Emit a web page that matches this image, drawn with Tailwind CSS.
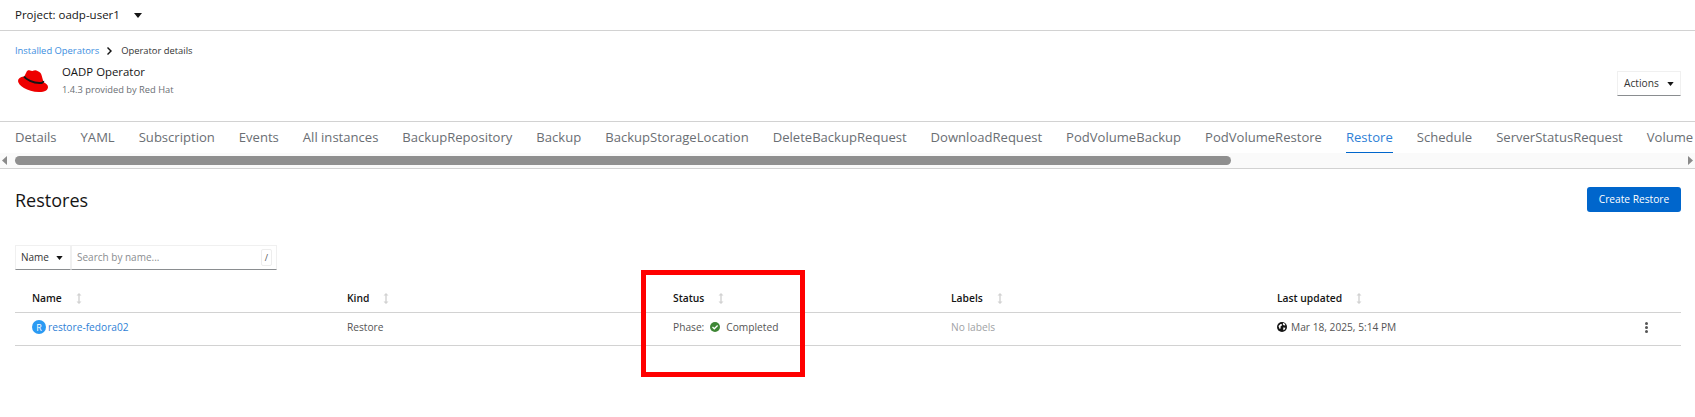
<!DOCTYPE html>
<html lang="en">
<head>
<meta charset="utf-8">
<title>Restores</title>
<script src="https://cdn.jsdelivr.net/npm/@tailwindcss/browser@4"></script>
</head>
<body class="bg-white font-['Open_Sans','Liberation_Sans',sans-serif] text-[#151515] overflow-hidden">
<div class="relative w-[1695px] h-[417px] overflow-hidden">

  <!-- Project bar -->
  <div class="h-[31px] border-b border-[#d2d2d2] pl-[15px] flex items-center gap-[14px] text-[11.5px]">
    <span>Project: oadp-user1</span>
    <svg class="w-[8px] h-[5px]" viewBox="0 0 8 5"><path d="M0 0h8L4 5z" fill="#151515"/></svg>
  </div>

  <!-- Header -->
  <div class="h-[91px] border-b border-[#d2d2d2] pl-[15px] pr-[14px] pt-[12px] relative">
    <div class="flex items-center text-[9.4px] h-[16px]">
      <span class="text-[#3c8ee0]">Installed Operators</span>
      <svg class="w-[6px] h-[8px] mx-[8px]" viewBox="0 0 6 8"><path d="M1 0l4 4-4 4-1-1 3-3-3-3z" fill="#151515"/></svg>
      <span class="text-[#333]">Operator details</span>
    </div>
    <div class="flex justify-between mt-[4px]">
      <div class="flex gap-[14px]">
        <svg class="w-[30px] h-[22px] ml-[3px] mt-[7px]" viewBox="0 0 30 22">
          <path d="M6 7L8.500 2C9 .5 10.500 0 12 .5C13 .8 14 1.200 15 .8C16.500 0 18 0 20 1.200C22 2.400 23 3 23.500 5L25.500 12L14 13z" fill="#e00"/>
          <path d="M5.500 6.500C2.500 7 0 8.500 0 11C0 15 9 22 21 22C27 22 30 20 30 17C30 15 28 13 25 12L14 11z" fill="#e00"/>
          <path d="M6 6.500C8 9.500 15 13 21.500 13C24 13 25.500 12.500 25.300 11" stroke="#151515" stroke-width="2" fill="none"/>
        </svg>
        <div>
          <div class="text-[11.4px] leading-[17px] font-medium text-[#151515]">OADP Operator</div>
          <div class="text-[9.3px] leading-[14px] mt-[3px] text-[#6a6e73]">1.4.3 provided by Red Hat</div>
        </div>
      </div>
      <div class="h-[25px] w-[64px] mt-[8px] border border-[#f0f0f0] border-b-[#8a8d90] flex items-center justify-between pl-[6px] pr-[6px] text-[10.2px] text-[#333]">
        <span>Actions</span>
        <svg class="w-[7px] h-[4px]" viewBox="0 0 8 5"><path d="M0 0h8L4 5z" fill="#151515"/></svg>
      </div>
    </div>
  </div>

  <!-- Tabs -->
  <div class="h-[47px] border-b border-[#d2d2d2] relative overflow-hidden">
    <nav class="flex gap-[24px] pl-[15px] h-[31px] text-[13.07px] leading-[30px] text-[#6a6e73] whitespace-nowrap">
      <span>Details</span><span>YAML</span><span>Subscription</span><span>Events</span><span>All instances</span><span>BackupRepository</span><span>Backup</span><span>BackupStorageLocation</span><span>DeleteBackupRequest</span><span>DownloadRequest</span><span>PodVolumeBackup</span><span>PodVolumeRestore</span>
      <span class="text-[#2f7fd6] border-b border-[#06c] h-[31px]">Restore</span>
      <span>Schedule</span><span>ServerStatusRequest</span><span>Volume</span>
    </nav>
    <div class="h-[15px] bg-[#fafafa] flex items-center pl-[2px] pr-[2px] gap-[8px]">
      <svg class="w-[5px] h-[9px]" viewBox="0 0 5 9"><path d="M5 0v9L0 4.500z" fill="#8a8a8a"/></svg>
      <div class="w-[1216px] h-[9px] rounded-full bg-[#8f8f8f]"></div>
      <svg class="w-[5px] h-[9px] ml-auto" viewBox="0 0 5 9"><path d="M0 0v9l5-4.500z" fill="#8a8a8a"/></svg>
    </div>
  </div>

  <!-- Body -->
  <main class="pl-[15px] pr-[14px]">
    <div class="flex justify-between items-start pt-[18px]">
      <h1 class="text-[18px] leading-[26px] font-medium text-[#151515]">Restores</h1>
      <button class="w-[94px] h-[25px] rounded-[3px] bg-[#06c] text-white text-[10.2px]">Create Restore</button>
    </div>

    <div class="flex w-[262px] h-[25px] mt-[32px] text-[10px]">
      <div class="w-[56px] border border-[#f0f0f0] border-b-[#8a8d90] flex items-center justify-between pl-[5px] pr-[7px] text-[#333]">
        <span>Name</span>
        <svg class="w-[7px] h-[4px]" viewBox="0 0 8 5"><path d="M0 0h8L4 5z" fill="#151515"/></svg>
      </div>
      <div class="flex-1 border border-[#f0f0f0] border-b-[#8a8d90] flex items-center justify-between pl-[5px] pr-[4px] text-[#8a8d90]">
        <span>Search by name...</span>
        <span class="w-[11px] h-[17px] border border-[#ededed] rounded-[2px] flex items-center justify-center text-[#555] text-[9px]">/</span>
      </div>
    </div>

    <div class="grid grid-cols-[315px_326px_278px_326px_1fr] mt-[18px] h-[25px] pt-[3px] border-b border-[#d2d2d2] pl-[17px] items-start text-[10.3px] font-semibold leading-[14px] text-[#151515]">
      <div class="flex items-center gap-[14px]">Name<svg class="w-[6px] h-[11px]" viewBox="0 0 6 11"><path d="M3 0l2.500 2.500H3.700v6h1.800L3 11 .5 8.500h1.800v-6H.5z" fill="#d2d2d2"/></svg></div>
      <div class="flex items-center gap-[14px]">Kind<svg class="w-[6px] h-[11px]" viewBox="0 0 6 11"><path d="M3 0l2.500 2.500H3.700v6h1.800L3 11 .5 8.500h1.800v-6H.5z" fill="#d2d2d2"/></svg></div>
      <div class="flex items-center gap-[14px]">Status<svg class="w-[6px] h-[11px]" viewBox="0 0 6 11"><path d="M3 0l2.500 2.500H3.700v6h1.800L3 11 .5 8.500h1.800v-6H.5z" fill="#d2d2d2"/></svg></div>
      <div class="flex items-center gap-[14px]">Labels<svg class="w-[6px] h-[11px]" viewBox="0 0 6 11"><path d="M3 0l2.500 2.500H3.700v6h1.800L3 11 .5 8.500h1.800v-6H.5z" fill="#d2d2d2"/></svg></div>
      <div class="flex items-center gap-[14px]">Last updated<svg class="w-[6px] h-[11px]" viewBox="0 0 6 11"><path d="M3 0l2.500 2.500H3.700v6h1.800L3 11 .5 8.500h1.800v-6H.5z" fill="#d2d2d2"/></svg></div>
    </div>

    <div class="grid grid-cols-[315px_326px_278px_326px_1fr] h-[33px] pb-[3px] border-b border-[#d2d2d2] pl-[17px] items-center text-[10.2px] text-[#555]">
      <div class="flex items-center gap-[2px]">
        <span class="w-[14px] h-[14px] rounded-full bg-[#2b9af3] text-white text-[9px] flex items-center justify-center">R</span>
        <span class="text-[#2f7fd6]">restore-fedora02</span>
      </div>
      <div>Restore</div>
      <div class="flex items-center gap-[6px]">
        <span>Phase:</span>
        <svg class="w-[10px] h-[10px]" viewBox="0 0 10 10"><circle cx="5" cy="5" r="5" fill="#3e8635"/><path d="M2.500 5l1.800 1.800 3.300-3.300" stroke="#fff" stroke-width="1.300" fill="none"/></svg>
        <span>Completed</span>
      </div>
      <div class="text-[#a0a2a5]">No labels</div>
      <div class="flex items-center relative">
        <div class="flex items-center gap-[4px] whitespace-nowrap">
          <svg class="w-[10px] h-[10px]" viewBox="0 0 10 10"><circle cx="5" cy="5" r="5" fill="#151515"/><path d="M1.500 4l2-2 1.500 .3-.3 1.500-1.200 .7 .2 1.800-1 .8-.7-1.600zM6 .8l1.800 .9 .6 1.600-1.400 .2-1.200-1zM6.200 5.600l2.300 .2-1 2-1.100 .5z" fill="#fff"/></svg>
          <span>Mar 18, 2025, 5:14 PM</span>
        </div>
        <svg class="absolute left-[368px] w-[3px] h-[11px]" viewBox="0 0 3 11"><circle cx="1.500" cy="1.500" r="1.500" fill="#555"/><circle cx="1.500" cy="5.500" r="1.500" fill="#555"/><circle cx="1.500" cy="9.500" r="1.500" fill="#555"/></svg>
      </div>
    </div>
  </main>

  <!-- Annotation -->
  <div class="absolute left-[641px] top-[270px] w-[164px] h-[107px] border-[5px] border-[#ff0000]"></div>
</div>
</body>
</html>
